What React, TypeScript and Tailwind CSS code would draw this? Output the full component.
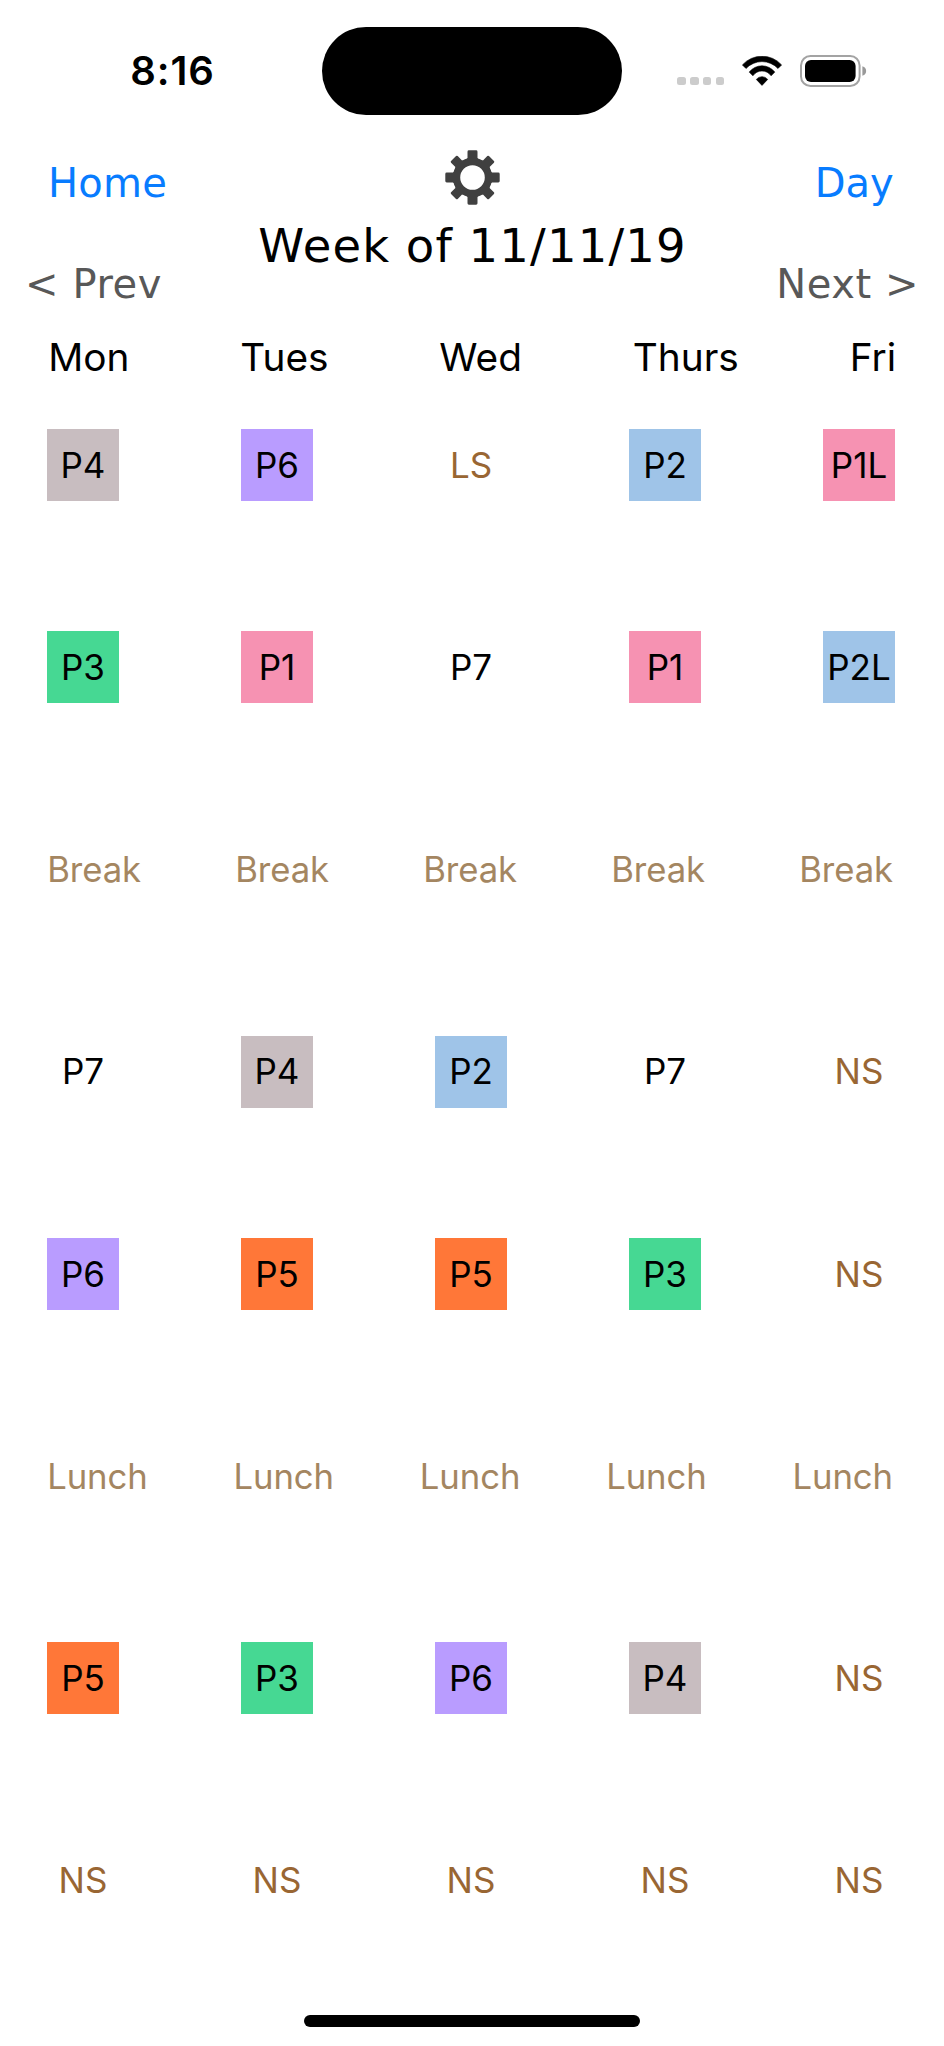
import clsx from "clsx";

type Tone = "gray" | "purple" | "blue" | "pink" | "green" | "orange" | "plain" | "brown";

type Row =
  | { kind: "periods"; cells: [string, Tone][] }
  | { kind: "label"; text: string };

const toneClasses: Record<Tone, string> = {
  gray: "bg-[#c8bdc0] text-black",
  purple: "bg-[#b99cff] text-black",
  blue: "bg-[#9fc4e8] text-black",
  pink: "bg-[#f692b2] text-black",
  green: "bg-[#46d893] text-black",
  orange: "bg-[#ff7738] text-black",
  plain: "text-black",
  brown: "text-[#996633]",
};

const days = ["Mon", "Tues", "Wed", "Thurs", "Fri"];

const rows: Row[] = [
  { kind: "periods", cells: [["P4", "gray"], ["P6", "purple"], ["LS", "brown"], ["P2", "blue"], ["P1L", "pink"]] },
  { kind: "periods", cells: [["P3", "green"], ["P1", "pink"], ["P7", "plain"], ["P1", "pink"], ["P2L", "blue"]] },
  { kind: "label", text: "Break" },
  { kind: "periods", cells: [["P7", "plain"], ["P4", "gray"], ["P2", "blue"], ["P7", "plain"], ["NS", "brown"]] },
  { kind: "periods", cells: [["P6", "purple"], ["P5", "orange"], ["P5", "orange"], ["P3", "green"], ["NS", "brown"]] },
  { kind: "label", text: "Lunch" },
  { kind: "periods", cells: [["P5", "orange"], ["P3", "green"], ["P6", "purple"], ["P4", "gray"], ["NS", "brown"]] },
  { kind: "periods", cells: [["NS", "brown"], ["NS", "brown"], ["NS", "brown"], ["NS", "brown"], ["NS", "brown"]] },
];

function WifiIcon() {
  return (
    <svg className="h-[30px] w-[40px]" viewBox="0 0 40 30" stroke="black" strokeWidth="0.6" strokeLinejoin="round">
      <path d="M.4 8.9A26.4 26.4 0 0 1 39.6 8.9L36 12.5A22 22 0 0 0 4 12.5Z" />
      <path d="M7.2 16.1A16.2 16.2 0 0 1 32.8 16.1L29.1 19.8A11 11 0 0 0 10.9 19.8Z" />
      <path d="M14.3 23.4A7.3 7.3 0 0 1 25.7 23.4L20 29.4Z" />
    </svg>
  );
}

function BatteryIcon() {
  return (
    <svg className="h-[32px] w-[67px]" viewBox="0 0 67 32" fill="none">
      <rect x="1" y="1" width="58.6" height="30" rx="9.5" stroke="#a3a3a3" strokeWidth="2" />
      <rect x="5" y="5" width="50.6" height="22" rx="6" fill="black" />
      <path d="M62.4 11.2C67.4 12.4 67.4 19.6 62.4 20.8Z" fill="#999" />
    </svg>
  );
}

function GearIcon() {
  return (
    <svg className="h-[55px] w-[55px]" viewBox="-27.5 -27.5 55 55" fill="#404040">
      <circle r="16" fill="none" stroke="#404040" strokeWidth="7.4" />
      {[0, 90, 180, 270].map((angle) => (
        <path
          key={angle}
          transform={`rotate(${angle})`}
          d="M-6.8 -17L-5 -19.5V-25.8Q-5 -27.2 -3.6 -27.2H3.6Q5 -27.2 5 -25.8V-19.5L6.8 -17Z"
        />
      ))}
      {[45, 135, 225, 315].map((angle) => (
        <path
          key={angle}
          transform={`rotate(${angle})`}
          d="M-6.8 -17L-4.7 -19.5V-25.6Q-4.7 -26.8 -3.5 -26.8H3.5Q4.7 -26.8 4.7 -25.6V-19.5L6.8 -17Z"
        />
      ))}
    </svg>
  );
}

function StatusBar() {
  return (
    <div className="flex h-[142px] items-center">
      <div className="w-[321.7px] pl-[130.3px] text-[40px] leading-[48px] font-semibold tracking-[0.9px]">8:16</div>
      <div className="h-[88.6px] w-[300.6px] rounded-full bg-black" />
      <div className="flex h-[32px] items-center pl-[54.7px]">
        <div className="mt-[20px] flex gap-[4.2px]">
          {[0, 1, 2, 3].map((dot) => (
            <span key={dot} className="h-[8.6px] w-[8.7px] rounded-[2.5px] bg-[#cccccc]" />
          ))}
        </div>
        <div className="ml-[17.6px]">
          <WifiIcon />
        </div>
        <div className="ml-[17.8px]">
          <BatteryIcon />
        </div>
      </div>
    </div>
  );
}

function Toolbar() {
  return (
    <div className="flex h-[178px] justify-between font-['DejaVu_Sans',sans-serif] text-[40px] leading-[48px] whitespace-nowrap">
      <div className="flex w-[257px] flex-col gap-[53px] pt-[16.6px]">
        <button className="pl-[48.1px] text-left tracking-[0.2px] text-[#087cff]">Home</button>
        <button className="pl-[25px] text-left tracking-[0.6px] text-[#585858]">&lt; Prev</button>
      </div>
      <div className="flex flex-col items-center gap-[16.5px] pt-[8px]">
        <div className="pl-[0.8px]">
          <GearIcon />
        </div>
        <h1 className="pl-[1.2px] text-[46.5px] tracking-[1.2px] [word-spacing:-0.6px]">Week of 11/11/19</h1>
      </div>
      <div className="flex w-[257px] flex-col gap-[53px] pt-[16.6px]">
        <button className="pr-[50.4px] text-right text-[#087cff]">Day</button>
        <button className="pr-[24.8px] text-right tracking-[0.6px] text-[#585858]">Next &gt;</button>
      </div>
    </div>
  );
}

function ScheduleRow({ row }: { row: Row }) {
  if (row.kind === "label") {
    return (
      <div className="flex h-[72px] items-center justify-between pr-[51px] pb-[0.6px] pl-[47.2px] text-[34.7px] tracking-[-0.1px] text-[#a48661]">
        {days.map((day) => (
          <span key={day}>{row.text}</span>
        ))}
      </div>
    );
  }
  return (
    <div className="flex h-[72px] justify-between pr-[49px] pl-[47px]">
      {row.cells.map(([text, tone], i) => (
        <div key={i} className={clsx("flex w-[72px] items-center justify-center pb-[0.6px]", toneClasses[tone])}>
          {text}
        </div>
      ))}
    </div>
  );
}

export default function App() {
  return (
    <div className="flex h-[2046px] w-[944px] flex-col overflow-hidden bg-white font-[Inter,sans-serif] text-black">
      <StatusBar />
      <Toolbar />
      <div className="flex h-[74px] items-center justify-between pr-[47.9px] pl-[48.2px] text-[38.8px] leading-[48px]">
        {days.map((day) => (
          <span key={day}>{day}</span>
        ))}
      </div>
      <div className="mt-[35.2px] flex h-[1487.2px] flex-col justify-between text-[35px] leading-[44px]">
        {rows.map((row, i) => (
          <ScheduleRow key={i} row={row} />
        ))}
      </div>
      <div className="mt-[98.2px] h-[12.2px] w-[336.6px] self-center rounded-full bg-black" />
    </div>
  );
}
